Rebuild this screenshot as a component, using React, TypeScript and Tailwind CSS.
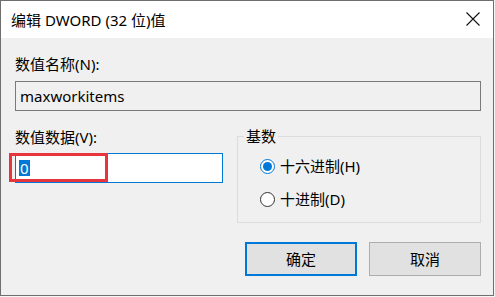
import React from "react"

function Radio({ checked, label }: { checked?: boolean; label: string }) {
  return (
    <div className="flex items-center h-[20px]">
      <div
        className={
          checked
            ? "w-[15px] h-[15px] rounded-full border border-[#0078d7] bg-white flex items-center justify-center"
            : "w-[15px] h-[15px] rounded-full border border-[#333333] bg-white"
        }
      >
        {checked && <div className="w-[9px] h-[9px] rounded-full bg-[#0078d7]" />}
      </div>
      <span className="ml-[5px] text-[15px] leading-[20px] text-black">{label}</span>
    </div>
  )
}

export default function App() {
  return (
    <div className="w-[495px] h-[297px] bg-[#f7f7f7] font-['Noto_Sans','Noto_Sans_CJK_SC',sans-serif]">
      <div className="w-[494px] h-[296px] border border-[#6f6f6f] bg-[#f0f0f0] flex flex-col">
        {/* title bar */}
        <div className="h-[37px] bg-white flex items-center justify-between pl-[10px] pr-[13px]">
          <span className="text-[15px] leading-[20px] text-black">编辑 DWORD (32 位)值</span>
          <svg width="14" height="14" viewBox="0 0 14 14" className="mt-[-1px]">
            <path d="M0.5 0.5 L13.5 13.5 M13.5 0.5 L0.5 13.5" stroke="#111" strokeWidth="1.1" fill="none" />
          </svg>
        </div>

        <div className="flex-1 pl-[14px] pr-[12px] pt-[16px]">
          <div className="text-[15px] leading-[20px] text-black">数值名称(N):</div>
          <div className="mt-[7px] h-[30px] border border-[#7a7a7a] pl-[4px] flex items-center text-[15px] text-black">
            maxworkitems
          </div>

          <div className="mt-[16px] flex gap-[14px]">
            <div className="w-[208px]">
              <div className="text-[15px] leading-[20px] text-black">数值数据(V):</div>
              <div className="relative mt-[6px] h-[30px] border border-[#0078d7] bg-white pl-[3px] flex items-center">
                <span className="bg-[#0078d7] text-white text-[15px] leading-[16px] px-[1px]">0</span>
                <div className="absolute left-[-7px] top-[-1px] w-[99px] h-[29px] border-[3px] border-[#e8343c]" />
              </div>
            </div>

            <fieldset className="flex-1 h-[96px] border border-[#dcdcdc] pt-[11px]">
              <legend className="ml-[6px] px-[2px] text-[15px] leading-[18px] text-black">基数</legend>
              <div className="flex flex-col gap-[13px] pl-[22px]">
                <Radio checked label="十六进制(H)" />
                <Radio label="十进制(D)" />
              </div>
            </fieldset>
          </div>

          <div className="mt-[19px] flex justify-end gap-[12px]">
            <button className="w-[112px] h-[34px] border-2 border-[#0078d7] bg-[#e1e1e1] text-[15px] text-black">
              确定
            </button>
            <button className="w-[112px] h-[34px] border border-[#adadad] bg-[#e1e1e1] text-[15px] text-black">
              取消
            </button>
          </div>
        </div>
      </div>
    </div>
  )
}
